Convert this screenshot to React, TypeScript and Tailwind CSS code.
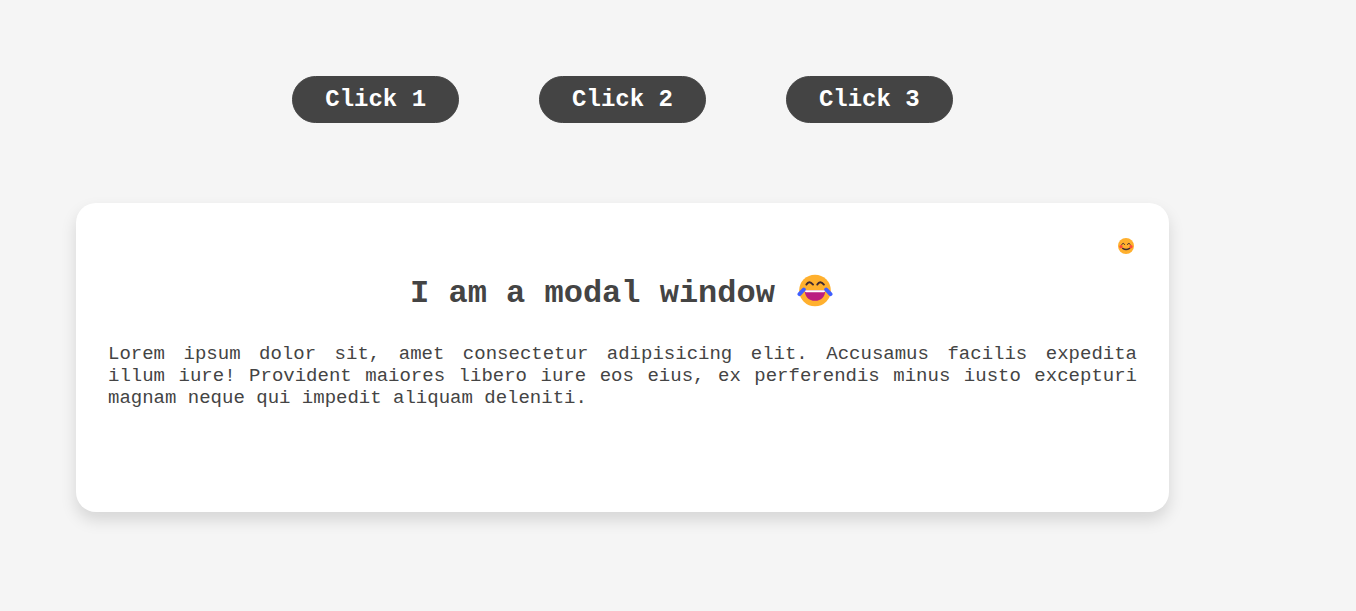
const labels = ['Click 1', 'Click 2', 'Click 3'];

function SmileIcon() {
  return (
    <svg viewBox="39 10 48 48" className="size-4" fill="none" aria-hidden="true">
      <circle cx="63" cy="34" r="24" fill="#ffb02e" />
      <circle cx="48" cy="36" r="5" fill="#ff4c3c" />
      <circle cx="78" cy="36" r="5" fill="#ff4c3c" />
      <path d="M50 29q5-7 9 0M67 29q5-7 9 0" stroke="#402a32" strokeWidth="3" strokeLinecap="round" />
      <path d="M53 41q10 7 21 0" stroke="#402a32" strokeWidth="4" strokeLinecap="round" />
    </svg>
  );
}

function JoyIcon() {
  return (
    <svg viewBox="20 28 108 100" className="h-[33px] w-9" fill="none" aria-hidden="true">
      <circle cx="74" cy="78" r="48" fill="#ffb02e" />
      <path d="M48 60q8-14 20 0M81 60q8-14 20 0" stroke="#402a32" strokeWidth="6" strokeLinecap="round" />
      <path d="M43 77h62c0 20-12 32-31 32S43 97 43 77z" fill="#bb1d80" />
      <path d="M43 77h62c0 3-1 6-4 6H47c-3 0-4-3-4-6z" fill="#fff" />
      <path d="M27 89l13-14M108 75l13 14" stroke="#3f5fff" strokeWidth="12" strokeLinecap="round" />
    </svg>
  );
}

export default function App() {
  return (
    <div className="min-h-screen bg-[#f5f5f5] pt-19 pr-[187px] pb-19 pl-19 font-['Liberation_Mono',monospace] text-[#444]">
      <div className="flex justify-center gap-20">
        {labels.map((label) => (
          <button
            key={label}
            type="button"
            className="rounded-full border border-[#444] bg-[#444] px-8 py-[9px] text-2xl leading-[27px] font-bold whitespace-nowrap text-white"
          >
            {label}
          </button>
        ))}
      </div>
      <section
        role="dialog"
        aria-labelledby="modal-title"
        className="mt-20 min-h-[309px] rounded-[20px] bg-white p-8 shadow-[0_8px_16px_rgba(0,0,0,0.13)]"
      >
        <div className="flex justify-end pt-[3px] pr-[3px]">
          <button type="button" aria-label="Close">
            <SmileIcon />
          </button>
        </div>
        <h1
          id="modal-title"
          className="mt-5 flex items-start justify-center gap-[22px] pr-0.5 text-[32px] leading-10 font-bold"
        >
          I am a modal window
          <JoyIcon />
        </h1>
        <p className="mt-[29px] text-justify text-[19px] leading-[22px]">
          Lorem ipsum dolor sit, amet consectetur adipisicing elit. Accusamus facilis expedita illum&nbsp;iure!
          Provident maiores libero iure eos eius, ex perferendis minus iusto excepturi magnam neque qui impedit aliquam
          deleniti.
        </p>
      </section>
    </div>
  );
}
